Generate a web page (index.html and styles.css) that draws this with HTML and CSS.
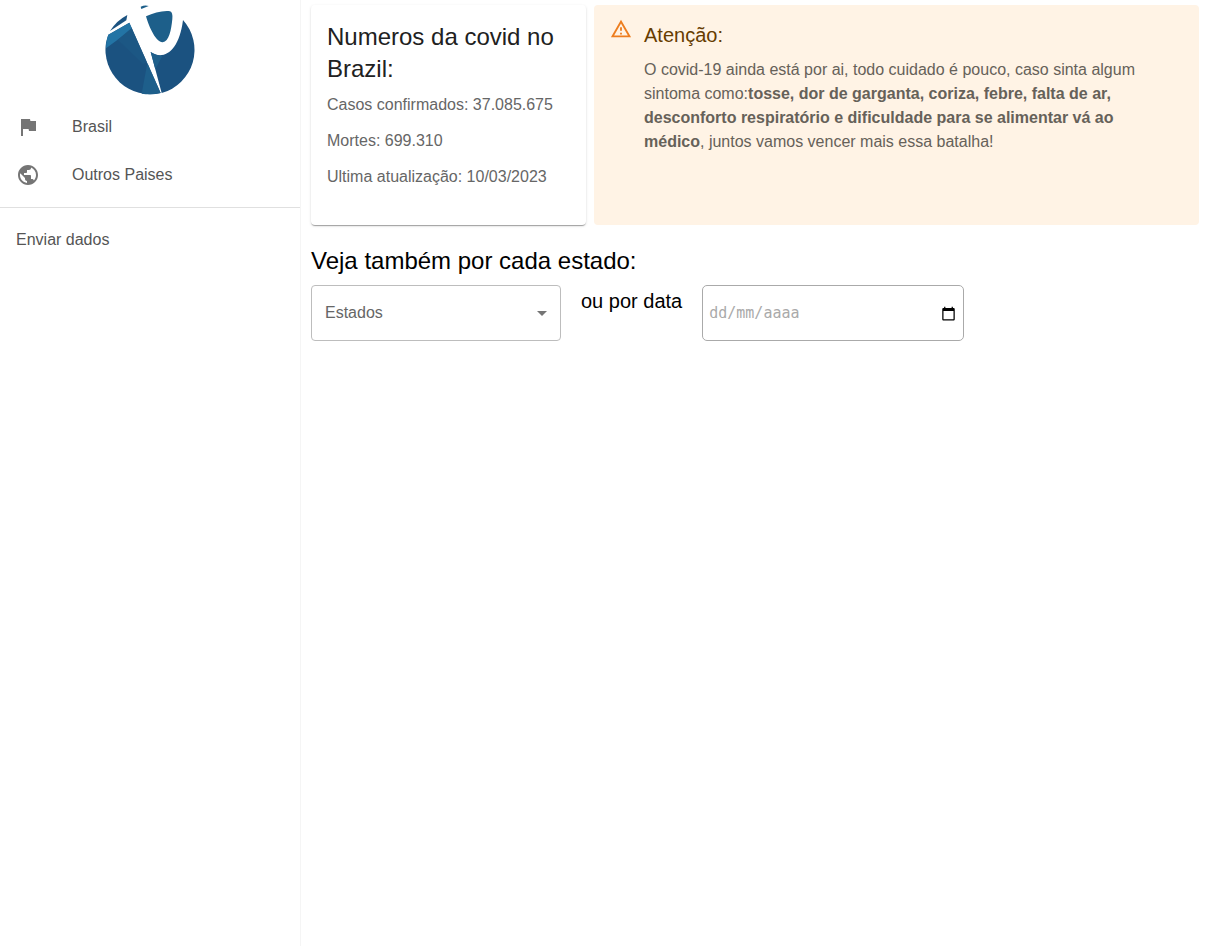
FILE: index.html
```html
<!DOCTYPE html>
<html lang="pt-BR">
<head>
<meta charset="utf-8">
<meta name="viewport" content="width=device-width, initial-scale=1">
<title>Covid no Brasil</title>
<link rel="stylesheet" href="styles.css">
</head>
<body>
<div class="app">
  <aside class="sidebar">
    <svg class="logo" viewBox="30 15 270 270" role="img" aria-label="Logo">
      <g fill="#1b5280">
        <path d="M45 93A134 134 0 0 1 97 45L94 61Z"/>
        <path d="M40 104L103 68L197 279A134 134 0 0 1 33 128Z"/>
        <path fill="#1d5f8a" d="M137 20Q150 14 161 18L139 27Z"/>
        <path fill="#1d5f8a" d="M153 49C176 39 204 31 225 34Q234 37 232 57C229 89 222 125 203 127C184 128 163 84 153 49Z"/>
        <path d="M167 156C205 182 252 156 264 60A134 134 0 0 1 200 279Z"/>
      </g>
      <path fill="#2374a5" d="M40 104L103 68L112 88L68 119L33 145Q33 120 40 104Z"/>
      <path fill="#1c5784" d="M68 119L110 84L155 185L145 193Z"/>
      <path fill="#1e5f8b" d="M157 189L197 279Q170 286 140 281Z"/>
      <path fill="#1e5f8b" d="M167 156Q181 167 202 168L181 208Z"/>
    </svg>
    <nav>
      <ul class="menu">
        <li><a class="item" href="#brasil">
          <svg class="item-icon" viewBox="0 0 24 24" aria-hidden="true"><path d="M14.4 6 14 4H5v17h2v-7h5.600l.4 2h7V6z"/></svg>
          <span>Brasil</span></a></li>
        <li><a class="item" href="#paises">
          <svg class="item-icon" viewBox="0 0 24 24" aria-hidden="true"><path d="M12 2C6.480 2 2 6.480 2 12s4.480 10 10 10 10-4.480 10-10S17.520 2 12 2zm-1 17.930c-3.950-.49-7-3.850-7-7.930 0-.62.080-1.210.21-1.790L9 15v1c0 1.100.9 2 2 2v1.930zm6.900-2.540c-.26-.81-1-1.390-1.900-1.390h-1v-3c0-.55-.45-1-1-1H8v-2h2c.55 0 1-.45 1-1V7h2c1.100 0 2-.9 2-2v-.41c2.930 1.190 5 4.060 5 7.410 0 2.080-.8 3.970-2.100 5.390z"/></svg>
          <span>Outros Paises</span></a></li>
      </ul>
      <ul class="menu menu-divided">
        <li><a class="item" href="#enviar">Enviar dados</a></li>
      </ul>
    </nav>
  </aside>

  <main class="content">
    <div class="summary">
      <section class="card">
        <h1 class="title">Numeros da covid no Brazil:</h1>
        <p>Casos confirmados: 37.085.675</p>
        <p>Mortes: 699.310</p>
        <p>Ultima atualização: 10/03/2023</p>
      </section>
      <section class="alert" role="alert">
        <svg class="alert-icon" viewBox="0 0 24 24" aria-hidden="true"><path d="M12 5.990 19.530 19H4.470L12 5.990M12 2 1 21h22L12 2zm1 14h-2v2h2v-2zm0-6h-2v4h2v-4z"/></svg>
        <div class="alert-message">
          <h2 class="subtitle">Atenção:</h2>
          <p>O covid-19 ainda está por ai, todo cuidado é pouco, caso sinta algum sintoma como:<strong>tosse, dor de garganta, coriza, febre, falta de ar, desconforto respiratório e dificuldade para se alimentar vá ao médico</strong>, juntos vamos vencer mais essa batalha!</p>
        </div>
      </section>
    </div>

    <h2 class="title">Veja também por cada estado:</h2>
    <form class="filters">
      <div class="field field-state">
        <select class="control" aria-label="Estados">
          <option>Estados</option>
        </select>
        <svg class="arrow" viewBox="0 0 24 24" aria-hidden="true"><path d="m7 10 5 5 5-5z"/></svg>
      </div>
      <label class="subtitle" for="data">ou por data</label>
      <div class="field field-date">
        <input class="control" id="data" type="text" inputmode="numeric" placeholder="dd/mm/aaaa">
        <button class="picker" type="button" aria-label="Abrir calendário">
          <svg viewBox="0 0 24 24" aria-hidden="true"><path d="M20 3h-1V1h-2v2H7V1H5v2H4c-1.100 0-2 .9-2 2v16c0 1.100.9 2 2 2h16c1.100 0 2-.9 2-2V5c0-1.100-.9-2-2-2zm0 18H4V8h16v13z"/></svg>
        </button>
      </div>
    </form>
  </main>
</div>
</body>
</html>
```
FILE: styles.css
```css
* {
  box-sizing: border-box;
}

body,
h1,
h2,
p,
ul {
  margin: 0;
}

body {
  background: #fff;
  color: #000;
  font: 16px/24px "Liberation Sans", Arial, sans-serif;
}

.app {
  display: flex;
  min-height: 100vh;
}

.sidebar {
  flex: 0 0 301px;
  border-right: 1px solid #f5f5f5;
}

.logo {
  display: block;
  width: 90px;
  margin: 5px auto 8px;
}

.menu {
  padding: 0 0 8px;
  list-style: none;
}

.menu-divided {
  padding-top: 8px;
  border-top: 1px solid #e0e0e0;
}

.item {
  display: flex;
  align-items: center;
  gap: 32px;
  height: 48px;
  padding: 0 16px;
  color: #555;
  text-decoration: none;
}

.item-icon {
  width: 24px;
  height: 24px;
  fill: #757575;
}

.content {
  flex: 1;
  min-width: 0;
  padding: 5px 9px 0 10px;
}

.summary {
  display: grid;
  grid-template-columns: 5fr 11fr;
  gap: 8px;
  margin-bottom: 20px;
}

.title {
  margin-bottom: 8px;
  font-size: 24px;
  line-height: 32px;
  font-weight: 400;
}

.subtitle {
  font-size: 20px;
  line-height: 32px;
  font-weight: 400;
}

.card {
  padding: 16px 16px 24px;
  border-radius: 4px;
  box-shadow: 0 2px 1px -1px rgba(0, 0, 0, 0.2), 0 1px 1px rgba(0, 0, 0, 0.14), 0 1px 3px rgba(0, 0, 0, 0.12);
  color: #666;
}

.card .title {
  color: #212121;
}

.card p {
  margin-bottom: 12px;
}

.alert {
  display: flex;
  gap: 12px;
  padding: 6px 32px 6px 16px;
  border-radius: 4px;
  background: #fff3e5;
  color: #666159;
}

.alert-icon {
  flex: none;
  width: 22px;
  height: 22px;
  margin-top: 7px;
  fill: #ed7d1f;
}

.alert-message {
  padding: 8px 0;
}

.alert .subtitle {
  margin-bottom: 7px;
  color: #663c00;
}

.filters {
  display: flex;
  flex-wrap: wrap;
  gap: 20px;
}

.field {
  position: relative;
  height: 56px;
}

.field-state {
  width: 250px;
}

.field-date {
  width: 262px;
}

.control {
  width: 100%;
  height: 100%;
  border: 1px solid #bdbdbd;
  border-radius: 4px;
  background: #fff;
  color: #666;
  font: inherit;
  appearance: none;
}

select.control {
  padding: 0 32px 0 13px;
}

input.control {
  padding: 0 32px 0 6px;
  border-color: #aaa;
  border-radius: 5px;
  font: 15px/24px "DejaVu Sans Mono", monospace;
}

input.control::placeholder {
  color: #aaa;
  opacity: 1;
}

.arrow {
  position: absolute;
  top: 16px;
  right: 7px;
  width: 24px;
  height: 24px;
  fill: #757575;
  pointer-events: none;
}

.picker {
  position: absolute;
  top: 18px;
  right: 6px;
  display: grid;
  place-items: center;
  width: 20px;
  height: 20px;
  padding: 0;
  border: 0;
  background: none;
}

.picker svg {
  width: 15px;
  height: 15px;
}
```
